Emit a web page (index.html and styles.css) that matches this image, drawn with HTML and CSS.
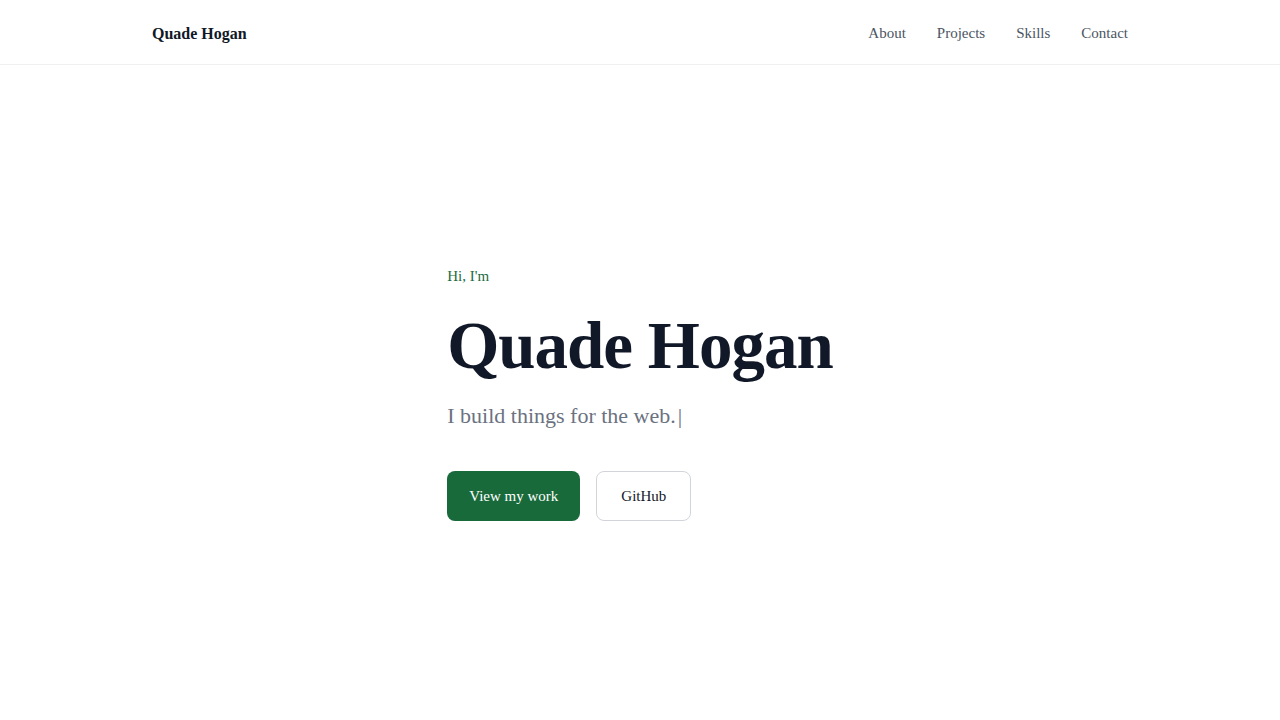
FILE: index.html
```html
<!DOCTYPE html>
<html lang="en">
<head>
<meta charset="utf-8">
<title>Quade Hogan</title>
<link rel="stylesheet" href="styles.css">
</head>
<body>
<header class="site-header">
  <div class="container header-inner">
    <a class="logo" href="#">Quade Hogan</a>
    <nav class="nav">
      <a href="#about">About</a>
      <a href="#projects">Projects</a>
      <a href="#skills">Skills</a>
      <a href="#contact">Contact</a>
    </nav>
  </div>
</header>
<main class="hero">
  <div class="hero-inner">
    <p class="eyebrow">Hi, I'm</p>
    <h1 class="title">Quade Hogan</h1>
    <p class="tagline">I build things for the web.<span class="cursor">|</span></p>
    <div class="actions">
      <a class="btn btn-primary" href="#projects">View my work</a>
      <a class="btn btn-outline" href="#">GitHub</a>
    </div>
  </div>
</main>
</body>
</html>
```
FILE: styles.css
```css
* { box-sizing: border-box; }
html, body { margin: 0; padding: 0; }
body {
  font-family: "Liberation Serif", "DejaVu Serif", serif;
  background: #ffffff;
  color: #111827;
}
a { text-decoration: none; color: inherit; }
.container {
  max-width: 1024px;
  margin: 0 auto;
  padding: 0 24px;
}
.site-header {
  height: 65px;
  border-bottom: 1px solid #f0f0f0;
}
.header-inner {
  height: 64px;
  padding-top: 3px;
  display: flex;
  align-items: center;
  justify-content: space-between;
}
.logo {
  font-weight: 700;
  font-size: 16px;
  color: #111827;
}
.nav {
  display: flex;
  gap: 31px;
}
.nav a {
  font-size: 15px;
  color: #4b5563;
}
.hero {
  height: 655px;
  display: flex;
  align-items: center;
  justify-content: center;
}
.hero-inner {
  display: flex;
  flex-direction: column;
  align-items: flex-start;
  padding-top: 4px;
}
.eyebrow {
  margin: 0;
  font-size: 15px;
  color: #1f6b3f;
}
.title {
  margin: 24px 0 0;
  font-size: 67px;
  line-height: 1.1;
  font-weight: 700;
  color: #111827;
  letter-spacing: -1px;
}
.tagline {
  margin: 21px 0 0;
  font-size: 22px;
  color: #6b7280;
}
.cursor { margin-left: 2px; font-weight: 300; }
.actions {
  display: flex;
  gap: 16px;
  margin-top: 42px;
}
.btn {
  display: inline-flex;
  align-items: center;
  justify-content: center;
  height: 50px;
  padding: 0 24px;
  border-radius: 8px;
  font-size: 15px;
}
.btn-primary {
  background: #186a3b;
  color: #ffffff;
  padding: 0 22px;
}
.btn-outline {
  border: 1px solid #d1d5db;
  color: #111827;
  background: #ffffff;
}
```
